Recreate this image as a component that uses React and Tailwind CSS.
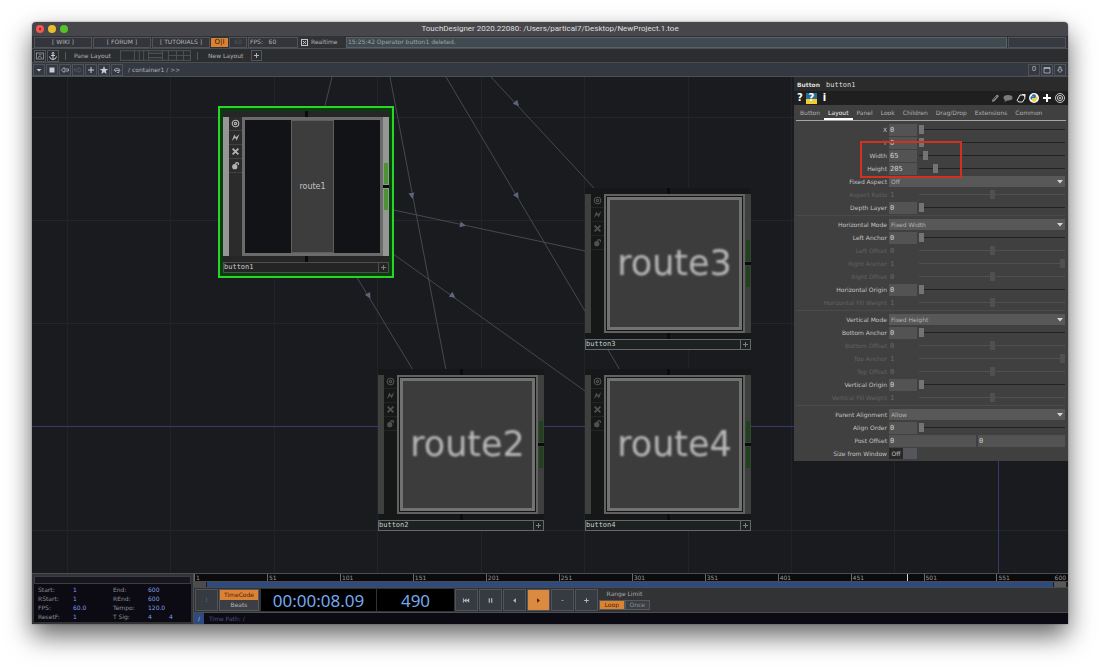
import React, { useState } from "react";
import clsx from "clsx";

const GRID_X = [67, 170, 274, 377, 481, 584, 688, 791, 894];
const GRID_Y = [117, 220, 323, 530];

const WIRES = [
  { from: [332, 77], to: [324, 110] },
  { from: [390, 77], to: [446, 370], arrow: [412, 196] },
  { from: [446, 77], to: [620, 370], arrow: [517, 196] },
  { from: [491, 77], to: [594, 188], arrow: [517, 104] },
  { from: [389, 209], to: [585, 251], arrow: [463, 225] },
  { from: [389, 251], to: [585, 391], arrow: [453, 296] },
  { from: [347, 261], to: [413, 370], arrow: [369, 296] },
];

const TABS = ["Button", "Layout", "Panel", "Look", "Children", "Drag/Drop", "Extensions", "Common"];

const SECTIONS = [
  [
    { label: "X", value: "0", pos: 0 },
    { label: "Y", value: "0", pos: 0 },
    { label: "Width", value: "65", pos: 3 },
    { label: "Height", value: "205", pos: 10 },
    { label: "Fixed Aspect", menu: "Off" },
    { label: "Aspect Ratio", value: "1", pos: 50, off: true },
    { label: "Depth Layer", value: "0", pos: 0 },
  ],
  [
    { label: "Horizontal Mode", menu: "Fixed Width" },
    { label: "Left Anchor", value: "0", pos: 0 },
    { label: "Left Offset", value: "0", pos: 50, off: true },
    { label: "Right Anchor", value: "1", pos: 100, off: true },
    { label: "Right Offset", value: "0", pos: 50, off: true },
    { label: "Horizontal Origin", value: "0", pos: 0 },
    { label: "Horizontal Fill Weight", value: "1", pos: 50, off: true },
  ],
  [
    { label: "Vertical Mode", menu: "Fixed Height" },
    { label: "Bottom Anchor", value: "0", pos: 0 },
    { label: "Bottom Offset", value: "0", pos: 50, off: true },
    { label: "Top Anchor", value: "1", pos: 100, off: true },
    { label: "Top Offset", value: "0", pos: 50, off: true },
    { label: "Vertical Origin", value: "0", pos: 0 },
    { label: "Vertical Fill Weight", value: "1", pos: 50, off: true },
  ],
  [
    { label: "Parent Alignment", menu: "Allow" },
    { label: "Align Order", value: "0", pos: 0 },
    { label: "Post Offset", pair: ["0", "0"] },
    { label: "Size from Window", toggle: true },
  ],
];

const TitleBar = () => (
  <header className="relative flex h-[14px] items-center justify-center rounded-t bg-[#47474b]">
    <div className="absolute left-1 flex gap-1">
      <span className="flex size-[8px] items-center justify-center rounded-full bg-[#f4574f]">
        <span className="size-[2px] rounded-full bg-[#7a1410]" />
      </span>
      <span className="size-[8px] rounded-full bg-[#e9bd2e]" />
      <span className="size-[8px] rounded-full bg-[#53c22b]" />
    </div>
    <h1 className="font-['Roboto',sans-serif] text-[8px] leading-none text-[#dededf]">
      TouchDesigner 2020.22080: /Users/partical7/Desktop/NewProject.1.toe
    </h1>
  </header>
);

const BarButton = ({ className, children, ...rest }) => (
  <button
    className={clsx("flex items-center justify-center border border-[#50545a] leading-none", className)}
    {...rest}
  >
    {children}
  </button>
);

const LAYOUTS = [
  "",
  "M5 0V10M9 0V10",
  "M0 3H14M0 7H14",
  "M6 0V10M6 5H14",
  "M7 0V10M0 5H14",
];

const Toolbars = () => (
  <div className="text-[#b2b4b7]">
    <div className="flex h-[13px] items-center gap-px border-b border-[#4a4d50] bg-[#303236] px-[2px]">
      <BarButton className="h-[11px] w-[58px] bg-[#33353a]">[ WIKI ]</BarButton>
      <BarButton className="h-[11px] w-[58px] bg-[#33353a]">[ FORUM ]</BarButton>
      <BarButton className="h-[11px] w-[58px] bg-[#33353a]">[ TUTORIALS ]</BarButton>
      <button className="h-[9px] w-[17px] bg-[#dc8333] text-[7px] leading-none text-[#2b1a0a]">O|I</button>
      <BarButton className="h-[11px] w-[18px] bg-[#33353a] text-[#55585d]">60</BarButton>
      <div className="flex h-[11px] w-[50px] items-center border border-[#50545a] bg-[#33353a] pl-px leading-none">
        FPS:&nbsp;&nbsp; 60
      </div>
      <label className="ml-[2px] flex w-[44px] items-center gap-[3px] leading-none">
        <input type="checkbox" defaultChecked className="peer sr-only" />
        <svg viewBox="0 0 7 7" className="size-[7px]" fill="none" stroke="#c4c6c8">
          <rect x=".5" y=".5" width="6" height="6" />
          <path d="M2 2L5 5M5 2L2 5" />
        </svg>
        Realtime
      </label>
      <div className="flex h-[11px] flex-1 items-center border border-[#5a6166] bg-[#414a50] pl-px leading-none text-[#9fa5a8]">
        15:25:42 Operator button1 deleted.
      </div>
      <div className="h-[11px] w-[58px] border border-[#50545a] bg-[#363a40]" />
    </div>

    <div className="flex h-[14px] items-center border-b border-[#4a4d50] bg-[#2c2d2f] px-[2px]">
      <BarButton aria-label="Palette" className="size-[12px]">
        <svg viewBox="0 0 10 10" className="size-[10px]" fill="none" stroke="#a0a4a8" strokeWidth=".8">
          <rect x="1.5" y="2" width="7" height="6" />
          <path d="M3 7L4.500 5L5.500 6L7 7M4 3.800H6.500" />
        </svg>
      </BarButton>
      <BarButton aria-label="Bookmark" className="ml-px size-[12px]">
        <svg viewBox="0 0 10 10" className="size-[10px]" fill="none" stroke="#c3cbe0" strokeWidth="1">
          <circle cx="5" cy="2.300" r=".9" />
          <path d="M5 3.200V8.500M3 4.500H7M1.500 5.500Q2 8.500 5 8.500Q8 8.500 8.500 5.500" />
        </svg>
      </BarButton>
      <span className="ml-[6px] h-[8px] w-px bg-[#55585c]" />
      <span className="ml-2 w-[46px] leading-none">Pane Layout</span>
      {LAYOUTS.map((d, i) => (
        <button key={i} aria-label={`Layout ${i + 1}`} className="h-[11px] w-[14px]">
          <svg viewBox="0 0 14 10" className="h-[11px] w-[15px]" fill="none" stroke="#4c5054">
            <rect x=".5" y=".5" width="13" height="9" />
            <path d={d} />
          </svg>
        </button>
      ))}
      <span className="ml-[7px] h-[8px] w-px bg-[#55585c]" />
      <span className="ml-[10px] w-[43px] leading-none">New Layout</span>
      <BarButton aria-label="Add layout" className="size-[11px]">
        <PlusGlyph />
      </BarButton>
    </div>

    <div className="flex h-[14px] items-center border-b border-[#4b5058] bg-[#343841] px-px">
      <div className="flex w-[94px] gap-px">
        <PathButton label="Menu"><path d="M2.500 4H7.500L5 6.500Z" /></PathButton>
        <PathButton label="Stop"><path d="M2.500 2.500H7.500V7.500H2.500Z" /></PathButton>
        <PathButton label="Back" line><path d="M1.500 5L4 2.500V4H8.500V6H4V7.500Z" /></PathButton>
        <PathButton label="Forward" line dim><path d="M8.500 5L6 2.500V4H1.500V6H6V7.500Z" /></PathButton>
        <PathButton label="Add"><path d="M4.500 2H5.500V4.500H8V5.500H5.500V8H4.500V5.500H2V4.500H4.500Z" /></PathButton>
        <PathButton label="Favourite">
          <path d="M5 1L6.100 3.900L9.200 4L6.800 5.900L7.600 9L5 7.200L2.400 9L3.200 5.900L.8 4L3.900 3.900Z" />
        </PathButton>
        <PathButton label="Home" line><path d="M2 6Q2 3.500 5 3.500Q8 3.500 8 6M3.500 7V5.500H7V7.500H5" /></PathButton>
      </div>
      <nav className="ml-px flex gap-[2px] leading-none">
        <span>/</span>
        <a href="#container1">container1</a>
        <span>/</span>
        <span>&gt;&gt;</span>
      </nav>
      <div className="ml-auto mr-px flex gap-px">
        <BarButton className="size-[12px] text-[7px]">0</BarButton>
        <PathButton label="Maximise" line><path d="M2 2.500H8V8H2ZM2 3.500H8" /></PathButton>
        <PathButton label="Pin" line><path d="M4 2H6V5H7.500L5 7.500L2.500 5H4Z" /></PathButton>
      </div>
    </div>
  </div>
);

const PathButton = ({ label, line, dim, children }) => (
  <BarButton aria-label={label} className="size-[12px] shrink-0">
    <svg
      viewBox="0 0 10 10"
      className={clsx("size-[10px]", dim ? "text-[#5c6168]" : "text-[#c6ccd8]")}
      fill={line ? "none" : "currentColor"}
      stroke={line ? "currentColor" : "none"}
      strokeWidth=".7"
    >
      {children}
    </svg>
  </BarButton>
);

const PlusGlyph = () => (
  <svg viewBox="0 0 7 7" className="size-[7px]" fill="none" stroke="currentColor">
    <path d="M3.500 1V6M1 3.500H6" />
  </svg>
);

const Wire = ({ from, to, arrow }) => {
  const angle = (Math.atan2(to[1] - from[1], to[0] - from[0]) * 180) / Math.PI;
  return (
    <g>
      <path d={`M${from[0]} ${from[1]}L${to[0]} ${to[1]}`} stroke="#50555b" strokeWidth=".8" />
      {arrow && (
        <path
          d="M-3 -3L3 0L-3 3Z"
          fill="#5c6678"
          transform={`translate(${arrow[0]} ${arrow[1]}) rotate(${angle})`}
        />
      )}
    </g>
  );
};

const NetworkBackdrop = () => (
  <svg className="absolute inset-0 h-full w-full" fill="none">
    <g transform="translate(-32 -77)">
      {GRID_X.map((x) => (
        <path key={x} d={`M${x}.5 0V1000`} stroke="#212328" />
      ))}
      {GRID_Y.map((y) => (
        <path key={y} d={`M0 ${y}.5H4000`} stroke="#23262b" />
      ))}
      <path d="M0 426.500H4000M998.500 0V1000" stroke="#38396e" />
      {WIRES.map((w, i) => (
        <Wire key={i} {...w} />
      ))}
    </g>
  </svg>
);

const FLAG_ICONS = [
  <g key="view" fill="none" stroke="currentColor" strokeWidth="1.300">
    <circle cx="5" cy="5" r="3.600" />
    <circle cx="5" cy="5" r="1.300" />
  </g>,
  <path key="bypass" d="M.8 8.800L3.800 1.800L5.600 4.800L9.300 1.200L6.400 8.400L4.600 5.400Z" fill="currentColor" />,
  <path key="clone" d="M1.800 1.800L8.200 8.200M8.200 1.800L1.800 8.200" fill="none" stroke="currentColor" strokeWidth="2" />,
  <g key="lock">
    <circle cx="4.200" cy="6.300" r="2.900" fill="currentColor" />
    <path d="M5 4V2.800Q6.500 .8 8.200 2.500V4.500" fill="none" stroke="currentColor" strokeWidth="1.400" />
  </g>,
];

const Connector = ({ selected }) => (
  <div className={clsx("flex h-[6px] justify-center", selected ? "bg-[#252625]" : "bg-[#161719]")}>
    <span className="h-full w-[3px] bg-[#0a0b0c]" />
  </div>
);

const Node = ({ name, selected, children }) => (
  <div className="w-[166px]">
    <Connector selected={selected} />
    <div className="flex h-[139px]">
      <div className={clsx("w-[6px]", selected ? "bg-[#969696]" : "bg-[#3e403e]")} />
      <div
        className={clsx(
          "flex w-[13px] flex-col",
          selected ? "bg-[#2b2b2b] text-[#b2b2b2]" : "bg-[#161717] text-[#505050]"
        )}
      >
        {FLAG_ICONS.map((icon, i) => (
          <button
            key={i}
            aria-label="Flag"
            className={clsx(
              "flex h-[14px] items-center justify-center border-b",
              selected ? "border-[#414141]" : "border-[#232424]"
            )}
          >
            <svg viewBox="0 0 10 10" className="size-[9px]">{icon}</svg>
          </button>
        ))}
      </div>
      {children}
      <div
        className={clsx(
          "flex w-[6px] flex-col items-center justify-center",
          selected ? "bg-[#969696]" : "bg-[#3e403e]"
        )}
      >
        <span className={clsx("h-[21px] w-[4px]", selected ? "bg-[#4c9433]" : "bg-[#1f421c]")} />
        <span className="my-px h-[3px] w-full bg-[#0a0b0c]" />
        <span className={clsx("h-[21px] w-[4px]", selected ? "bg-[#4c9433]" : "bg-[#1f421c]")} />
      </div>
    </div>
    <Connector selected={selected} />
    <div
      className={clsx(
        "flex h-[11px] border font-['DejaVu_Sans_Mono',monospace] text-[7px] leading-none text-[#c9cccb]",
        selected ? "border-[#4e504e] bg-[#232423]" : "border-[#656867] bg-[#1c2222]"
      )}
    >
      <span className="flex flex-1 items-center">{name}</span>
      <button
        aria-label={`Activate ${name}`}
        className={clsx(
          "flex w-[10px] items-center justify-center border-l text-[#7c7f7e]",
          selected ? "border-[#4e504e]" : "border-[#656867]"
        )}
      >
        <PlusGlyph />
      </button>
    </div>
  </div>
);

const RouteViewer = ({ text }) => (
  <div className="flex flex-1 border-2 border-[#626262] bg-[#151515] p-px">
    <div className="flex flex-1 items-center justify-center border-[3px] border-[#727272] bg-[#3c3c3c]">
      <span className="blur-[1px] text-[35px] leading-none text-[#b8b8b8]">{text}</span>
    </div>
  </div>
);

const NODES = [
  { name: "button2", text: "route2", place: "left-[346px] top-[292px]" },
  { name: "button3", text: "route3", place: "left-[553px] top-[111px]" },
  { name: "button4", text: "route4", place: "left-[553px] top-[292px]" },
];

const FIELD = "h-[12px] min-w-0 font-['DejaVu_Sans_Mono',monospace] text-[7px] leading-none pl-px";

const SLIDER =
  "h-[12px] min-w-0 flex-1 appearance-none bg-transparent [&::-webkit-slider-runnable-track]:h-px [&::-webkit-slider-thumb]:-mt-1 [&::-webkit-slider-thumb]:h-[9px] [&::-webkit-slider-thumb]:w-[5px] [&::-webkit-slider-thumb]:appearance-none";

const ParamControl = ({ row, id }) => {
  if (row.menu) {
    return (
      <div className="relative flex flex-1">
        <select
          id={id}
          className="h-[11px] w-full appearance-none bg-[#585858] pl-[2px] text-[6px] leading-none text-[#b4b4b4]"
        >
          <option>{row.menu}</option>
        </select>
        <svg viewBox="0 0 6 4" className="pointer-events-none absolute right-[2px] top-1 h-[4px] w-[6px]">
          <path d="M0 0H6L3 3.500Z" fill="#d4d4d4" />
        </svg>
      </div>
    );
  }
  if (row.pair) {
    return (
      <div className="flex min-w-0 flex-1 gap-[2px]">
        {row.pair.map((v, i) => (
          <input
            key={i}
            id={i === 0 ? id : undefined}
            aria-label={`${row.label} ${i + 1}`}
            defaultValue={v}
            className={clsx(FIELD, "flex-1 bg-[#535353] text-[#d0d0d0]")}
          />
        ))}
      </div>
    );
  }
  if (row.toggle) {
    return (
      <button id={id} className="flex h-[11px] w-7 items-center bg-[#55555c] leading-none text-[#c4c4c4]">
        <span className="flex h-full w-[14px] items-center justify-center bg-[#282828]">Off</span>
      </button>
    );
  }
  return (
    <>
      <input
        id={id}
        defaultValue={row.value}
        disabled={row.off}
        className={clsx(FIELD, "w-7", row.off ? "text-[#686868]" : "bg-[#535353] text-[#d0d0d0]")}
      />
      <input
        type="range"
        aria-label={`${row.label} slider`}
        defaultValue={row.pos}
        disabled={row.off}
        className={clsx(
          SLIDER,
          row.off
            ? "[&::-webkit-slider-runnable-track]:bg-[#505050] [&::-webkit-slider-thumb]:bg-[#505050]"
            : "[&::-webkit-slider-runnable-track]:bg-[#222] [&::-webkit-slider-thumb]:bg-[#747474]"
        )}
      />
    </>
  );
};

const ParamPanel = () => {
  const [tab, setTab] = useState("Layout");

  return (
    <aside className="absolute right-0 top-0 w-[274px] bg-[#404040] pb-px">
      <div className="flex h-[14px] items-center gap-[6px] bg-[#2b2b2b] pl-[3px] pt-[2px] leading-none text-[#dcdcdc]">
        <b>Button</b>
        <span className="font-['DejaVu_Sans_Mono',monospace] text-[7px]">button1</span>
      </div>
      <div className="flex h-[14px] items-center bg-[#1f1f1f] px-[3px] text-white">
        <button className="text-[10px] font-bold leading-none">?</button>
        <button
          aria-label="Python help"
          className="ml-[3px] flex size-[11px] items-center justify-center bg-linear-to-b from-[#256d9c] from-50% to-[#f2cc32] to-50% text-[10px] font-bold leading-none"
        >
          ?
        </button>
        <button className="ml-[6px] text-[10px] font-bold leading-none">i</button>
        <div className="ml-auto flex gap-[3px]">
          <PanelIcon label="Edit">
            <path d="M2 9L2.500 6.500L7 1.500L9 3L4.500 8.300Z" fill="#8b8b8b" />
            <path d="M3.500 6.800L6.500 3.400" stroke="#1f1f1f" strokeWidth=".7" />
          </PanelIcon>
          <PanelIcon label="Comment">
            <ellipse cx="5" cy="4.700" rx="4.500" ry="2.700" fill="#7b7b7b" />
            <path d="M2 6L1.500 9L5 7Z" fill="#7b7b7b" />
          </PanelIcon>
          <PanelIcon label="Copy">
            <path d="M1 7.500L4 2H8L9 5L6.500 9H3Z" fill="none" stroke="#e6e6e6" />
            <path d="M5.500 1H9.500V4Z" fill="#e6e6e6" />
          </PanelIcon>
          <PanelIcon label="Python">
            <circle cx="5" cy="5" r="5" fill="#f4f4f4" />
            <path d="M3 2Q5 .6 6.800 2V4.200Q6.800 5 6 5H4Q2.800 5 2.800 6.500H2Q.8 5 2 3.300H5V3H3Z" fill="#2d6ea5" />
            <path d="M7 8Q5 9.400 3.200 8V6Q3.200 5.300 4 5.300H6Q7.200 5 7.200 3.500H8Q9.200 5 8 6.700H5V7H7Z" fill="#f0c92e" />
          </PanelIcon>
          <PanelIcon label="Add parameter">
            <path d="M5 1V9M1 5H9" stroke="#fff" strokeWidth="2" />
          </PanelIcon>
          <PanelIcon label="Viewer">
            <g fill="none" stroke="#dcdcdc" strokeWidth=".9">
              <circle cx="5" cy="5" r="4.500" />
              <circle cx="5" cy="5" r="2.600" />
              <circle cx="5" cy="5" r=".8" />
            </g>
          </PanelIcon>
        </div>
      </div>

      <div role="tablist" className="mx-[2px] flex h-[16px] border-b border-[#a5a5a5]">
        {TABS.map((t) => (
          <button
            key={t}
            role="tab"
            aria-selected={t === tab}
            onClick={() => setTab(t)}
            className={clsx(
              "border-b-2 px-1 pt-[2px] leading-none",
              t === tab ? "border-white text-[#f0f0f0]" : "border-transparent text-[#b0b0b0]"
            )}
          >
            {t}
          </button>
        ))}
      </div>

      <div className="pr-[3px] pt-[2px]">
        {SECTIONS.map((rows, s) => (
          <div key={s} className={clsx(s > 0 && "ml-[2px] mt-px border-t border-[#4b4b4b] pt-[2px]")}>
            {rows.map((row) => {
              const id = row.label.toLowerCase().replaceAll(" ", "-");
              return (
                <div key={row.label} className="flex h-[13px] items-center gap-[2px]">
                  <label
                    htmlFor={id}
                    className={clsx(
                      "shrink-0 text-right leading-none",
                      s > 0 ? "w-[91px]" : "w-[93px]",
                      row.off ? "text-[#626262]" : "text-[#c2c2c2]"
                    )}
                  >
                    {row.label}
                  </label>
                  <ParamControl row={row} id={id} />
                </div>
              );
            })}
          </div>
        ))}
      </div>

      {/* callout around the size fields */}
      <div className="pointer-events-none absolute left-[66px] top-16 h-[37px] w-[102px] border-2 border-[#d0321d]" />
    </aside>
  );
};

const PanelIcon = ({ label, children }) => (
  <button aria-label={label}>
    <svg viewBox="0 0 10 10" className="size-[10px]">{children}</svg>
  </button>
);

const TIMES = [
  ["Start:", "1", "End:", "600"],
  ["RStart:", "1", "REnd:", "600"],
  ["FPS:", "60.0", "Tempo:", "120.0"],
  ["ResetF:", "1", "T Sig:", "4", "4"],
];

const MARKS = [1, 51, 101, 151, 201, 251, 301, 351, 401, 451, 501, 551];

const TRANSPORT = [
  { label: "Rewind", d: "M1 2.500H2V7.500H1ZM2 5L5 2.500V7.500ZM5 5L8 2.500V7.500Z" },
  { label: "Pause", d: "M3 2.500H4.300V7.500H3ZM5.700 2.500H7V7.500H5.700Z" },
  { label: "Play reverse", d: "M3.500 5L6.500 2.500V7.500Z" },
  { label: "Play", d: "M6.500 5L3.500 2.500V7.500Z", active: true },
  { label: "Step back", d: "M4 4.700H6V5.500H4Z" },
  { label: "Step forward", d: "M4.500 2.500H5.500V4.500H7.500V5.500H5.500V7.500H4.500V5.500H2.500V4.500H4.500Z" },
];

const Timeline = () => {
  const [range, setRange] = useState("Loop");

  return (
    <footer className="flex h-[51px] border-t border-[#4c4e50] bg-[#323335] text-[#8e9094]">
      <div className="m-[2px] flex w-[157px] shrink-0 flex-col bg-[#0c0b14]">
        <div className="h-[8px] border border-[#3c3d42] bg-[#16161c]" />
        <table className="ml-1 mt-px w-[145px] table-fixed leading-none">
          <colgroup>
            <col className="w-[35px]" />
            <col className="w-[40px]" />
            <col className="w-[35px]" />
            <col className="w-[21px]" />
            <col />
          </colgroup>
          <tbody>
            {TIMES.map((cells) => (
              <tr key={cells[0]} className="h-[9px]">
                {cells.map((c, i) => (
                  <td key={i} className={clsx("p-0 whitespace-nowrap", (i === 1 || i > 2) && "text-[#7f9fe6]")}>
                    {c}
                  </td>
                ))}
              </tr>
            ))}
          </tbody>
        </table>
      </div>

      <div className="flex min-w-0 flex-1 flex-col border-l border-[#4c4e50]">
        <div className="relative flex h-[7px] bg-[#0b0b0d] text-[#9a9a9a]">
          {MARKS.map((m) => (
            <div
              key={m}
              className="flex basis-0 justify-between border-l border-[#6a6a6a] pl-px pr-[2px] leading-[7px]"
              style={{ flexGrow: m === 551 ? 49 : 50 }}
            >
              <span>{m}</span>
              {m === 551 && <span>600</span>}
            </div>
          ))}
          <span className="absolute top-0 h-full w-px bg-[#d6d6d6]" style={{ left: `${(489 / 599) * 100}%` }} />
        </div>
        <div className="flex h-[7px] items-stretch gap-px border-y border-[#4a4b4d] bg-[#1a1b1e] pr-[2px]">
          <span className="w-[12px] bg-[#4c4c4e]" />
          <span className="flex-1 bg-[#2f4a7e]" />
          <span className="w-[12px] bg-[#5a5855]" />
        </div>

        <div className="flex h-[24px] items-center gap-px px-px">
          <BarButton className="h-[22px] w-[23px] bg-[#363a41]">⁝</BarButton>
          <div className="mr-px flex h-[22px] w-[40px] flex-col border border-[#55585c]">
            <button className="flex-1 bg-[#dc8333] leading-none text-[#4c1f10]">TimeCode</button>
            <button className="flex-1 bg-[#3b3e44] leading-none text-[#b4b7bb]">Beats</button>
          </div>
          <div className="flex h-[22px] w-[115px] items-center justify-center bg-black font-['Noto_Sans',sans-serif] text-[17px] leading-none text-[#74a9ee]">
            00:00:08.09
          </div>
          <div className="flex h-[22px] w-[77px] items-center justify-center bg-black font-['Noto_Sans',sans-serif] text-[17px] leading-none text-[#74a9ee]">
            490
          </div>
          {TRANSPORT.map((t) => (
            <BarButton
              key={t.label}
              aria-label={t.label}
              className={clsx("h-[22px] w-[23px]", t.active ? "bg-[#dc8a40]" : "bg-[#363a41]")}
            >
              <svg
                viewBox="0 0 10 10"
                className={clsx("size-[9px]", t.active ? "text-[#4c160a]" : "text-[#b9bcc1]")}
                fill="currentColor"
              >
                <path d={t.d} />
              </svg>
            </BarButton>
          ))}
          <div className="flex w-[51px] flex-col items-center gap-[3px]">
            <span className="leading-none text-[#a8aaad]">Range Limit</span>
            <div className="flex h-[10px] w-full">
              {["Loop", "Once"].map((r) => (
                <button
                  key={r}
                  onClick={() => setRange(r)}
                  className={clsx(
                    "flex-1 border border-[#55585c] leading-none",
                    r === range ? "bg-[#dc8333] text-[#4c1f10]" : "bg-[#3b3e44]"
                  )}
                >
                  {r}
                </button>
              ))}
            </div>
          </div>
        </div>

        <div className="flex flex-1 items-center border-t border-[#4c4e50] bg-[#0c0b14] leading-none">
          <a href="#root" className="flex h-full w-[10px] items-center justify-center bg-[#2f4a7e] text-[#b9c6e4]">
            /
          </a>
          <span className="ml-[5px] text-[#4f5480]">Time Path: /</span>
        </div>
      </div>
    </footer>
  );
};

const App = () => (
  <div className="flex min-h-screen flex-col bg-white px-8 pt-[22px] pb-[43px] font-['DejaVu_Sans',sans-serif] text-[6px]">
    <div className="flex flex-1 flex-col rounded-t shadow-[0_12px_26px_rgba(0,0,0,0.6),0_0_2px_rgba(0,0,0,0.4)]">
      <TitleBar />
      <Toolbars />
      <main className="relative min-h-[496px] flex-1 overflow-hidden bg-[#1a1b1f]">
        <NetworkBackdrop />
        <div className="absolute left-[186px] top-[29px] border-2 border-[#2bd32b] bg-[#063f08] p-[3px]">
          <Node name="button1" selected>
            <div className="flex flex-1 border-[3px] border-[#6b6b6b] bg-[#121317] px-[46px]">
              <div className="flex flex-1 items-center justify-center border border-[#5e5e5e] bg-[#3d3d3d] text-[8px] leading-none text-[#c2c2c2]">
                route1
              </div>
            </div>
          </Node>
        </div>
        {NODES.map((n) => (
          <div key={n.name} className={clsx("absolute", n.place)}>
            <Node name={n.name}>
              <RouteViewer text={n.text} />
            </Node>
          </div>
        ))}
        <ParamPanel />
      </main>
      <Timeline />
    </div>
  </div>
);

export default App;
